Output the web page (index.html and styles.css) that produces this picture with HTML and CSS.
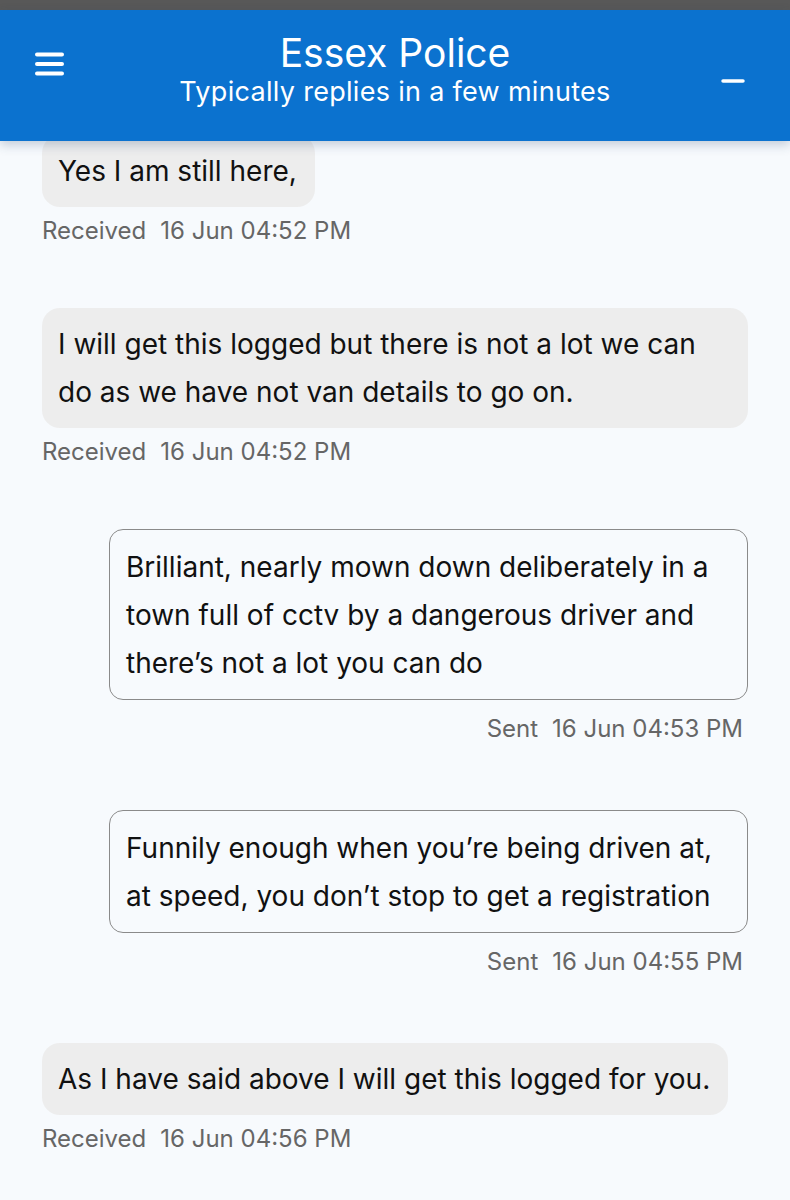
FILE: index.html
```html
<!DOCTYPE html>
<html lang="en">
<head>
    <meta charset="UTF-8">
    <meta name="viewport" content="width=device-width, initial-scale=1.0">
    <title>Essex Police - Chat</title>
    <link rel="stylesheet" href="styles.css">
</head>
<body>
    <div class="status-strip"></div>

    <header class="chat-header">
        <button class="header-btn menu-btn" aria-label="Menu">
            <svg width="30" height="24" viewBox="0 0 30 24">
                <path d="M2 2.5h25M2 12h25M2 21.5h25" stroke="#fff" stroke-width="4" stroke-linecap="round" fill="none"/>
            </svg>
        </button>
        <div class="header-text">
            <h1 class="header-title">Essex Police</h1>
            <p class="header-subtitle">Typically replies in a few minutes</p>
        </div>
        <button class="header-btn minimise-btn" aria-label="Minimise">
            <svg width="24" height="6" viewBox="0 0 24 6">
                <path d="M2 3h20" stroke="#fff" stroke-width="3.5" stroke-linecap="round" fill="none"/>
            </svg>
        </button>
    </header>

    <main class="conversation">
        <div class="message received">
            <div class="bubble">Yes I am still here,</div>
            <div class="stamp"><span class="stamp-state">Received</span><span>16 Jun 04:52 PM</span></div>
        </div>

        <div class="message received">
            <div class="bubble">I will get this logged but there is not a lot we can do as we have not van details to go on.</div>
            <div class="stamp"><span class="stamp-state">Received</span><span>16 Jun 04:52 PM</span></div>
        </div>

        <div class="message sent">
            <div class="bubble">Brilliant, nearly mown down deliberately in a town full of cctv by a dangerous driver and there’s not a lot you can do</div>
            <div class="stamp"><span class="stamp-state">Sent</span><span>16 Jun 04:53 PM</span></div>
        </div>

        <div class="message sent">
            <div class="bubble">Funnily enough when you’re being driven at, at speed, you don’t stop to get a registration</div>
            <div class="stamp"><span class="stamp-state">Sent</span><span>16 Jun 04:55 PM</span></div>
        </div>

        <div class="message received">
            <div class="bubble">As I have said above I will get this logged for you.</div>
            <div class="stamp"><span class="stamp-state">Received</span><span>16 Jun 04:56 PM</span></div>
        </div>
    </main>
</body>
</html>
```

FILE: styles.css
```css
* {
    margin: 0;
    padding: 0;
    box-sizing: border-box;
}

body {
    font-family: Inter, "Liberation Sans", Arial, sans-serif;
    background: #f7fafd;
    color: #111;
    overflow: hidden;
}

.status-strip {
    height: 10px;
    background: #585858;
}

/* Header */
.chat-header {
    position: relative;
    z-index: 2;
    height: 131px;
    background: #0b72cf;
    color: #fff;
    display: grid;
    grid-template-columns: 100px 1fr 100px;
    box-shadow: 0 4px 10px rgba(40, 70, 110, 0.25);
}

.header-btn {
    background: none;
    border: 0;
    display: flex;
}

.menu-btn {
    padding: 42px 0 0 35px;
}

.minimise-btn {
    justify-content: flex-end;
    padding: 68px 45px 0 0;
}

.header-text {
    text-align: center;
    padding-top: 20px;
}

.header-title {
    font-size: 39px;
    font-weight: 400;
    line-height: 46px;
}

.header-subtitle {
    font-size: 27px;
    line-height: 31px;
    letter-spacing: 0.3px;
}

/* Conversation */
.conversation {
    margin-top: -6px;
    padding: 0 42px;
    display: flex;
    flex-direction: column;
    gap: 63px;
}

.message {
    display: flex;
    flex-direction: column;
}

.bubble {
    font-size: 28px;
    line-height: 48px;
    padding: 12px 18px 12px 16px;
}

.received {
    align-items: flex-start;
}

.received .bubble {
    background: #ededed;
    border-radius: 18px;
}

.sent {
    align-items: flex-end;
}

.sent .bubble {
    width: 639px;
    padding: 13px 32px 12px 16px;
    border: 1px solid #8a8a8a;
    border-radius: 14px;
    background: #f7fafd;
}

.stamp {
    font-size: 24px;
    line-height: 28px;
    color: #666;
    margin-top: 10px;
    display: flex;
    gap: 14px;
}

.sent .stamp {
    margin: 15px 5px 4px 0;
}
```
